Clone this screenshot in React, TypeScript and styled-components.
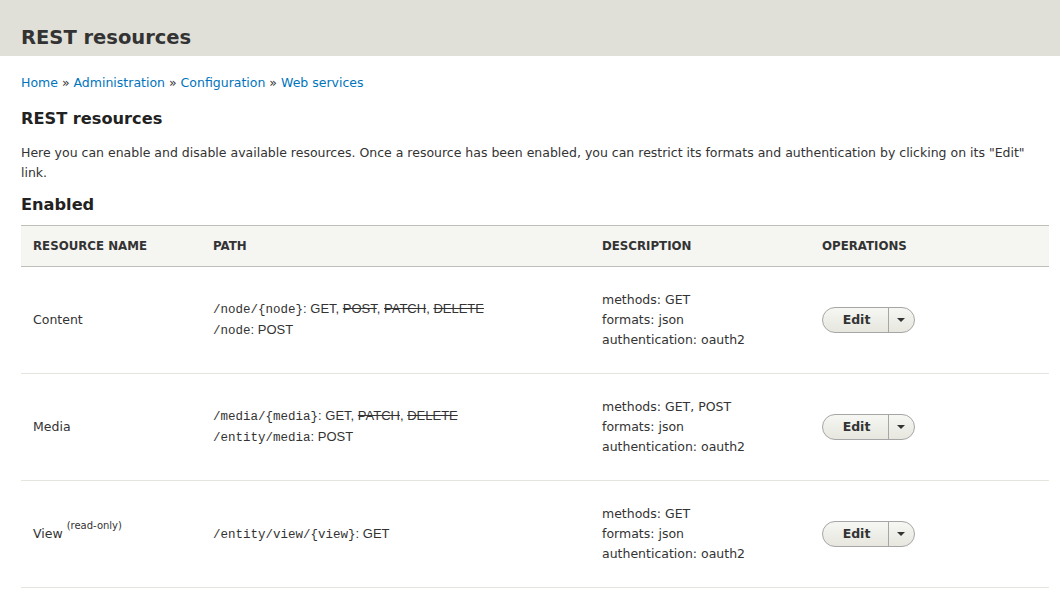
import { FC } from 'react';
import styled, { createGlobalStyle } from 'styled-components';

const GlobalStyle = createGlobalStyle`
	html, body {
		margin: 0;
		padding: 0;
		background: #fff;
	}
	body {
		font-family: 'DejaVu Sans', 'Lucida Grande', sans-serif;
		font-size: 12.5px;
		color: #333;
	}
`;

const PageHeader = styled.header`
	background: #e0e0d8;
	height: 56px;
	padding: 18px 21px 0;
	display: flex;
	align-items: center;
	box-sizing: border-box;
`;

const PageTitle = styled.h1`
	margin: 0;
	font-size: 19.5px;
	font-weight: bold;
	color: #333;
`;

const Content = styled.main`
	padding: 17px 11px 0 21px;
`;

const Breadcrumb = styled.nav`
	line-height: 20px;
	color: #333;
	a {
		color: #0074bd;
		text-decoration: none;
	}
`;

const SectionTitle = styled.h2<{ top: number }>`
	margin: ${(p) => p.top}px 0 0;
	font-size: 16.2px;
	font-weight: bold;
	line-height: 24px;
	color: #222;
`;

const Intro = styled.p`
	margin: 12px 0 0;
	line-height: 20px;
`;

const Table = styled.table`
	width: 100%;
	margin-top: 8px;
	border-collapse: collapse;
	table-layout: fixed;
`;

const HeadCell = styled.th<{ width: number }>`
	width: ${(p) => p.width - 24}px;
	text-align: left;
	background: #f5f5f2;
	border-top: 1px solid #bfbfba;
	border-bottom: 1px solid #bfbfba;
	height: 40px;
	padding: 0 12px;
	font-size: 11.8px;
	font-weight: bold;
	text-transform: uppercase;
	color: #333;
`;

const Row = styled.tr`
	border-bottom: 1px solid #e6e4df;
`;

const Cell = styled.td`
	height: 106px;
	padding: 0 12px;
	vertical-align: middle;
	line-height: 20px;
`;

const ReadOnly = styled.sup`
	font-size: 10px;
	margin-left: 4px;
	vertical-align: 9px;
	line-height: 0;
`;

const PathLine = styled.div`
	font-family: 'Liberation Sans', Arial, sans-serif;
	font-size: 13px;
	white-space: nowrap;
	code {
		font-family: 'Liberation Mono', 'Courier New', monospace;
		font-size: 12.5px;
	}
	del {
		text-decoration: line-through;
	}
`;

const SplitButton = styled.div`
	display: inline-flex;
	height: 26px;
	box-sizing: border-box;
	border: 1px solid #a6a6a6;
	border-radius: 14px;
	background: linear-gradient(to bottom, #f6f6f3, #e7e7df);
	overflow: hidden;
`;

const EditButton = styled.span`
	width: 63px;
	display: flex;
	align-items: center;
	justify-content: center;
	font-weight: bold;
	font-size: 12.5px;
	color: #333;
	padding-left: 2px;
`;

const ToggleButton = styled.span`
	width: 25px;
	display: flex;
	align-items: center;
	justify-content: center;
	border-left: 1px solid #a6a6a6;
	&::after {
		content: '';
		border-left: 4px solid transparent;
		border-right: 4px solid transparent;
		border-top: 4px solid #333;
		margin-right: 2px;
	}
`;

type Method = { name: string; disabled?: boolean };
type Path = { path: string; methods: Method[] };
type Resource = {
	name: string;
	readOnly?: boolean;
	paths: Path[];
	methods: string;
};

const resources: Resource[] = [
	{
		name: 'Content',
		paths: [
			{
				path: '/node/{node}',
				methods: [
					{ name: 'GET' },
					{ name: 'POST', disabled: true },
					{ name: 'PATCH', disabled: true },
					{ name: 'DELETE', disabled: true }
				]
			},
			{ path: '/node', methods: [ { name: 'POST' } ] }
		],
		methods: 'GET'
	},
	{
		name: 'Media',
		paths: [
			{
				path: '/media/{media}',
				methods: [
					{ name: 'GET' },
					{ name: 'PATCH', disabled: true },
					{ name: 'DELETE', disabled: true }
				]
			},
			{ path: '/entity/media', methods: [ { name: 'POST' } ] }
		],
		methods: 'GET, POST'
	},
	{
		name: 'View',
		readOnly: true,
		paths: [ { path: '/entity/view/{view}', methods: [ { name: 'GET' } ] } ],
		methods: 'GET'
	}
];

const App: FC = () => {
	return (
		<>
			<GlobalStyle />
			<PageHeader>
				<PageTitle>REST resources</PageTitle>
			</PageHeader>
			<Content>
				<Breadcrumb>
					<a href="#">Home</a> » <a href="#">Administration</a> » <a href="#">Configuration</a> »{' '}
					<a href="#">Web services</a>
				</Breadcrumb>
				<SectionTitle top={14}>REST resources</SectionTitle>
				<Intro>
					Here you can enable and disable available resources. Once a resource has been enabled, you can
					restrict its formats and authentication by clicking on its "Edit" link.
				</Intro>
				<SectionTitle top={10}>Enabled</SectionTitle>
				<Table>
					<thead>
						<tr>
							<HeadCell width={180}>Resource name</HeadCell>
							<HeadCell width={389}>Path</HeadCell>
							<HeadCell width={220}>Description</HeadCell>
							<HeadCell width={239}>Operations</HeadCell>
						</tr>
					</thead>
					<tbody>
						{resources.map((r) => (
							<Row key={r.name}>
								<Cell>
									{r.name}
									{r.readOnly && <ReadOnly>(read-only)</ReadOnly>}
								</Cell>
								<Cell>
									{r.paths.map((p) => (
										<PathLine key={p.path}>
											<code>{p.path}</code>:{' '}
											{p.methods.map((m, i) => (
												<span key={m.name}>
													{m.disabled ? <del>{m.name}</del> : m.name}
													{i < p.methods.length - 1 && ', '}
												</span>
											))}
										</PathLine>
									))}
								</Cell>
								<Cell>
									<div>methods: {r.methods}</div>
									<div>formats: json</div>
									<div>authentication: oauth2</div>
								</Cell>
								<Cell>
									<SplitButton>
										<EditButton>Edit</EditButton>
										<ToggleButton />
									</SplitButton>
								</Cell>
							</Row>
						))}
					</tbody>
				</Table>
			</Content>
		</>
	);
};

export default App;
